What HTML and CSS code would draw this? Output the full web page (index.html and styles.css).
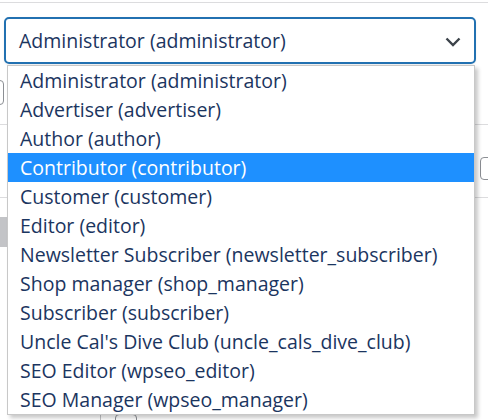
FILE: index.html
```html
<!DOCTYPE html>
<html lang="en">

<head>
    <meta charset="UTF-8">
    <title>user role</title>
    <link rel="stylesheet" href="styles.css">
</head>

<body>
    <div class="page">
        <div class="role-field">
            <div class="role-select">
                <span>Administrator (administrator)</span>
                <svg class="chevron" width="16" height="10" viewBox="0 0 16 10">
                    <path d="M1.5 1.5 L8 8 L14.5 1.5" fill="none" stroke="#3c434a" stroke-width="2.4" />
                </svg>
            </div>
            <ul class="role-list">
                <li>Administrator (administrator)</li>
                <li>Advertiser (advertiser)</li>
                <li>Author (author)</li>
                <li class="selected">Contributor (contributor)</li>
                <li>Customer (customer)</li>
                <li>Editor (editor)</li>
                <li>Newsletter Subscriber (newsletter_subscriber)</li>
                <li>Shop manager (shop_manager)</li>
                <li>Subscriber (subscriber)</li>
                <li>Uncle Cal's Dive Club (uncle_cals_dive_club)</li>
                <li>SEO Editor (wpseo_editor)</li>
                <li>SEO Manager (wpseo_manager)</li>
            </ul>
        </div>
        <div class="form-row first-row">
            <div class="text-input"></div>
        </div>
        <div class="form-row second-row">
            <div class="small-input"></div>
        </div>
        <div class="form-row third-row">
            <div class="gray-button"></div>
        </div>
        <div class="last-row">
            <div class="divider"></div>
            <div class="checkbox"></div>
        </div>
    </div>
</body>

</html>
```

FILE: styles.css
```css
body {
    margin: 0;
    background: #fff;
    font-family: "Open Sans", "Noto Sans", sans-serif;
}

.page {
    margin-top: 2px;
    border-top: 1px solid #dcdcde;
    height: 417px;
    overflow: hidden;
}

/*select*/

.role-field {
    position: relative;
    padding-top: 14px;
}

.role-select {
    box-sizing: border-box;
    display: flex;
    align-items: center;
    justify-content: space-between;
    margin-left: 4px;
    width: 472px;
    height: 47px;
    border: 2px solid #2271b1;
    border-radius: 5px;
    padding: 0 13px 0 13px;
    color: #1b3560;
    font-size: 19.5px;
    box-shadow: 0 1px 2px rgba(0, 0, 0, 0.08);
}

.chevron {
    margin-top: 2px;
}

/*dropdown*/

.role-list {
    position: absolute;
    z-index: 2;
    left: 7px;
    top: 62px;
    width: 466px;
    margin: 0;
    padding: 0;
    list-style: none;
    background: #fff;
    border: 1px solid #c8c8c8;
    box-shadow: 3px 3px 4px rgba(0, 0, 0, 0.22);
}

.role-list li {
    height: 29px;
    line-height: 29px;
    padding-left: 12px;
    color: #1b3560;
    font-size: 19.5px;
    white-space: nowrap;
}

.role-list .selected {
    background: #1e90ff;
    color: #fff;
}

/*form behind the list*/

.form-row {
    box-sizing: border-box;
    border-bottom: 1px solid #dcdcde;
}

.first-row {
    height: 61px;
    padding-top: 16px;
}

.text-input {
    margin-left: -10px;
    width: 12px;
    height: 23px;
    border: 1px solid #8c8f94;
    border-radius: 4px;
}

.second-row {
    height: 73px;
    padding-top: 32px;
}

.small-input {
    margin-left: 480px;
    width: 30px;
    height: 21px;
    border: 1px solid #8c8f94;
    border-radius: 4px;
}

.third-row {
    border-bottom: none;
    height: 216px;
    padding-top: 19px;
}

.gray-button {
    margin-left: -20px;
    width: 27px;
    height: 30px;
    background: #c3c4c7;
}

.last-row {
    display: flex;
    gap: 14px;
    padding-left: 100px;
}

.divider {
    width: 1px;
    height: 20px;
    background: #c3c4c7;
}

.checkbox {
    width: 20px;
    height: 20px;
    border: 1px solid #8c8f94;
    border-radius: 4px;
}
```
